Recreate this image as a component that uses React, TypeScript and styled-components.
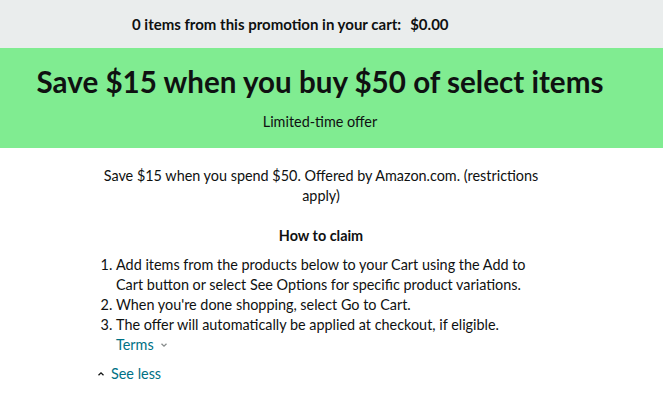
import React from 'react';
import styled, {createGlobalStyle} from 'styled-components';

const Global = createGlobalStyle`
    html, body {
        margin: 0;
        padding: 0;
        background: #fff;
    }
    body {
        font-family: Lato, "Liberation Sans", Arial, sans-serif;
        color: #0f1111;
        font-size: 14.4px;
        line-height: 20px;
    }
`;

const CartBar = styled.div`
    background: #eaeded;
    height: 48px;
    display: flex;
    align-items: center;
    padding-left: 132px;
    font-weight: 700;
    font-size: 15px;
    & span + span {
        margin-left: 9px;
    }
`;

const Banner = styled.section`
    background: #80ec91;
    height: 100px;
    box-sizing: border-box;
    padding: 16px 23px 0 0;
    display: flex;
    flex-direction: column;
    align-items: center;
`;

const Headline = styled.h1`
    margin: 0;
    font-size: 29.6px;
    line-height: 36px;
    font-weight: 700;
`;

const Badge = styled.div`
    margin-top: 12px;
    font-size: 14.4px;
    line-height: 20px;
`;

const Body = styled.div`
    width: 444px;
    margin: 18px 0 0 99px;
`;

const Summary = styled.p`
    margin: 0;
    text-align: center;
`;

const Heading = styled.h3`
    margin: 20px 0 0;
    font-size: 14.4px;
    line-height: 20px;
    font-weight: 700;
    text-align: center;
`;

const Steps = styled.ol`
    margin: 9px 0 0;
    padding-left: 17px;
`;

const Link = styled.a<{$pad?: number}>`
    display: inline-flex;
    align-items: center;
    gap: 6px;
    color: #007185;
    text-decoration: none;
    cursor: pointer;
    padding-left: ${p => p.$pad || 0}px;
`;

const Caret = styled.svg<{$tone: string}>`
    width: 8px;
    height: 8px;
    stroke: ${p => p.$tone};
    fill: none;
    stroke-width: 1.3;
`;

const LessRow = styled.div`
    margin-top: 8px;
    margin-left: -2px;
`;

const App: React.FC = () => {
    return (
        <>
            <Global />
            <CartBar>
                <span>0 items from this promotion in your cart:</span>
                <span>$0.00</span>
            </CartBar>
            <Banner>
                <Headline>Save $15 when you buy $50 of select items</Headline>
                <Badge>Limited-time offer</Badge>
            </Banner>
            <Body>
                <Summary>Save $15 when you spend $50. Offered by Amazon.com. (restrictions apply)</Summary>
                <Heading>How to claim</Heading>
                <Steps>
                    <li>Add items from the products below to your Cart using the Add to Cart button or select See Options for specific product variations.</li>
                    <li>When you're done shopping, select Go to Cart.</li>
                    <li>The offer will automatically be applied at checkout, if eligible.</li>
                </Steps>
                <div>
                    <Link $pad={17}>
                        Terms
                        <Caret $tone="#888c8c" viewBox="0 0 8 8"><path d="M1.5 2.8 L4 5.2 L6.5 2.8" /></Caret>
                    </Link>
                </div>
                <LessRow>
                    <Link>
                        <Caret $tone="#0f1111" viewBox="0 0 8 8"><path d="M1.5 5.2 L4 2.8 L6.5 5.2" /></Caret>
                        See less
                    </Link>
                </LessRow>
            </Body>
        </>
    );
};

export default App;
